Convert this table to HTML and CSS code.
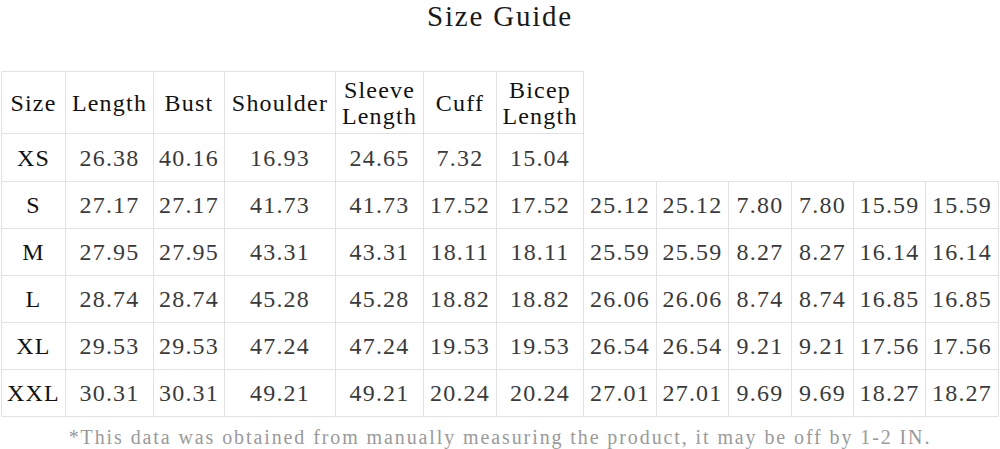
FILE: index.html
```html
<!DOCTYPE html>
<html lang="en">
<head>
<meta charset="utf-8">
<title>Size Guide</title>
<link rel="stylesheet" href="styles.css">
</head>
<body>
<main class="page">
  <h1 class="title">Size Guide</h1>
  <table class="guide">
    <colgroup>
      <col class="c64"><col class="c88"><col class="c71"><col class="c111"><col class="c88"><col class="c73"><col class="c87">
      <col class="c73"><col class="c72"><col class="c63"><col class="c62"><col class="c72"><col class="c73">
    </colgroup>
    <tr class="head">
      <th>Size</th><th>Length</th><th>Bust</th><th>Shoulder</th><th>Sleeve<br>Length</th><th>Cuff</th><th>Bicep<br>Length</th>
    </tr>
    <tr class="first">
      <th>XS</th><td>26.38</td><td>40.16</td><td>16.93</td><td>24.65</td><td>7.32</td><td>15.04</td>
    </tr>
    <tr>
      <th>S</th><td>27.17</td><td>27.17</td><td>41.73</td><td>41.73</td><td>17.52</td><td>17.52</td><td>25.12</td><td>25.12</td><td>7.80</td><td>7.80</td><td>15.59</td><td>15.59</td>
    </tr>
    <tr>
      <th>M</th><td>27.95</td><td>27.95</td><td>43.31</td><td>43.31</td><td>18.11</td><td>18.11</td><td>25.59</td><td>25.59</td><td>8.27</td><td>8.27</td><td>16.14</td><td>16.14</td>
    </tr>
    <tr>
      <th>L</th><td>28.74</td><td>28.74</td><td>45.28</td><td>45.28</td><td>18.82</td><td>18.82</td><td>26.06</td><td>26.06</td><td>8.74</td><td>8.74</td><td>16.85</td><td>16.85</td>
    </tr>
    <tr>
      <th>XL</th><td>29.53</td><td>29.53</td><td>47.24</td><td>47.24</td><td>19.53</td><td>19.53</td><td>26.54</td><td>26.54</td><td>9.21</td><td>9.21</td><td>17.56</td><td>17.56</td>
    </tr>
    <tr>
      <th>XXL</th><td>30.31</td><td>30.31</td><td>49.21</td><td>49.21</td><td>20.24</td><td>20.24</td><td>27.01</td><td>27.01</td><td>9.69</td><td>9.69</td><td>18.27</td><td>18.27</td>
    </tr>
  </table>
  <p class="note">*This data was obtained from manually measuring the product, it may be off by 1-2 IN.</p>
</main>
</body>
</html>
```

FILE: styles.css
```css
html, body {
  margin: 0;
  padding: 0;
  background: #ffffff;
}

body {
  width: 1000px;
  height: 449px;
  overflow: hidden;
  font-family: "Liberation Serif", "Times New Roman", serif;
  color: #111;
}

.page {
  display: flex;
  flex-direction: column;
  align-items: flex-start;
}

.title {
  align-self: stretch;
  margin: 0 0 39px 0;
  font-size: 29px;
  line-height: 32px;
  font-weight: normal;
  letter-spacing: 1.8px;
  text-align: center;
  color: #1a1a1a;
}

.guide {
  margin-left: 1px;
  border-collapse: collapse;
  table-layout: fixed;
  width: 997px;
  font-size: 24px;
  letter-spacing: 1.2px;
}

.c64 { width: 64px; }
.c88 { width: 88px; }
.c71 { width: 71px; }
.c111 { width: 111px; }
.c73 { width: 73px; }
.c87 { width: 87px; }
.c72 { width: 72px; }
.c63 { width: 63px; }
.c62 { width: 62px; }

.guide th,
.guide td {
  border: 1px solid #e2e2e2;
  padding: 0;
  text-align: center;
  vertical-align: middle;
  white-space: nowrap;
  font-weight: normal;
  line-height: 26px;
  height: 46px;
}

.guide th {
  color: #111;
}

.guide td {
  color: #3a3a3a;
}

.guide .head th {
  height: 61px;
}

.guide .first th,
.guide .first td {
  height: 47px;
}

.note {
  align-self: stretch;
  margin: 8px 0 0 0;
  font-size: 20px;
  line-height: 24px;
  letter-spacing: 1.9px;
  text-align: center;
  color: #9a9a9a;
  white-space: nowrap;
}
```
